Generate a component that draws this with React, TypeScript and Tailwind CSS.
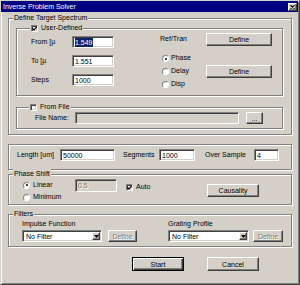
import React from "react";

const sunken =
  "border border-t-[#808080] border-l-[#808080] border-r-white border-b-white shadow-[inset_1px_1px_0_#404040,inset_-1px_-1px_0_#d4d0c8]";
const raised =
  "border border-t-white border-l-white border-r-[#404040] border-b-[#404040] shadow-[inset_-1px_-1px_0_#808080]";
const etched =
  "border border-[#808080] shadow-[inset_1px_1px_0_#fff,1px_1px_0_#fff]";
const disabledText = "text-[#808080] [text-shadow:1px_1px_0_#fff]";

function Legend({
  children,
  className = "",
}: {
  children: React.ReactNode;
  className?: string;
}) {
  return (
    <div
      className={`-mt-[6px] h-[10px] w-fit px-[1px] bg-[#d4d0c8] flex items-center gap-[3px] leading-[10px] ${className}`}
    >
      {children}
    </div>
  );
}

function TextBox({
  value,
  className = "",
  selected = false,
  disabled = false,
}: {
  value?: string;
  className?: string;
  selected?: boolean;
  disabled?: boolean;
}) {
  return (
    <div
      className={`${sunken} ${
        disabled ? "bg-[#d4d0c8]" : "bg-white"
      } flex items-center pl-[2px] leading-[9px] ${className}`}
    >
      {value && (
        <span
          className={
            selected
              ? "bg-[#0a246a] text-white"
              : disabled
              ? disabledText
              : ""
          }
        >
          {value}
        </span>
      )}
    </div>
  );
}

function Button({
  children,
  className = "",
  disabled = false,
}: {
  children: React.ReactNode;
  className?: string;
  disabled?: boolean;
}) {
  return (
    <div
      className={`${raised} bg-[#d4d0c8] flex items-center justify-center leading-[9px] ${
        disabled ? disabledText : ""
      } ${className}`}
    >
      {children}
    </div>
  );
}

function Check({ checked = false }: { checked?: boolean }) {
  return (
    <div className={`${sunken} bg-white w-[7px] h-[7px] shrink-0 flex items-center justify-center`}>
      {checked && (
        <svg width="5" height="5" viewBox="0 0 5 5">
          <path d="M0.5 2.3 L2 3.8 L4.6 1" stroke="#000" strokeWidth="1.2" fill="none" />
        </svg>
      )}
    </div>
  );
}

function Radio({ checked = false }: { checked?: boolean }) {
  return (
    <div className="w-[7px] h-[7px] shrink-0 rounded-full bg-white border border-t-[#808080] border-l-[#808080] border-r-white border-b-white flex items-center justify-center">
      {checked && <div className="w-[2px] h-[2px] rounded-full bg-black" />}
    </div>
  );
}

function Select({ className = "" }: { className?: string }) {
  return (
    <div className={`${sunken} bg-white h-[12px] flex items-stretch p-[1px] ${className}`}>
      <div className="flex-1 pl-[2px] flex items-center leading-[9px]">No Filter</div>
      <div className={`${raised} bg-[#d4d0c8] w-[8px] flex items-center justify-center`}>
        <svg width="5" height="3" viewBox="0 0 5 3">
          <path d="M0 0 H5 L2.5 3 Z" fill="#000" />
        </svg>
      </div>
    </div>
  );
}

export default function App() {
  return (
    <div className="w-[300px] h-[285px] bg-[#d4d0c8] border border-t-[#d4d0c8] border-l-[#d4d0c8] border-r-[#404040] border-b-[#404040] shadow-[inset_1px_1px_0_#fff,inset_-1px_-1px_0_#808080] flex flex-col font-['Liberation_Sans',Arial,sans-serif] text-[7px] text-black">
      {/* title bar */}
      <div className="h-[11px] mr-[1px] bg-[#000080] flex items-center justify-between pl-[2px]">
        <span className="text-white leading-[10px]">Inverse Problem Solver</span>
        <div className={`${raised} bg-[#d4d0c8] w-[9px] h-[8px] mr-[1px] flex items-center justify-center`}>
          <svg width="5" height="4" viewBox="0 0 5 4">
            <path d="M0.5 0.3 L4.5 3.7 M4.5 0.3 L0.5 3.7" stroke="#000" strokeWidth="1.1" />
          </svg>
        </div>
      </div>

      <div className="pl-[7px] flex flex-col">
        {/* Define Target Spectrum */}
        <div className={`${etched} mt-[6px] w-[284px] h-[117px] flex flex-col`}>
          <Legend className="ml-[4px]">Define Target Spectrum</Legend>

          <div className={`${etched} mt-[5px] ml-[7px] w-[267px] h-[68px] flex flex-col`}>
            <Legend className="ml-[13px]">
              <Check checked />
              <span>User-Defined</span>
            </Legend>
            <div className="flex">
              <div className="pl-[14px] mt-[3px] flex flex-col gap-[7px]">
                {[
                  ["From [µ", "1.549", true],
                  ["To [µ", "1.551", false],
                  ["Steps", "1000", false],
                ].map(([label, value, sel]) => (
                  <div key={label as string} className="flex items-center h-[12px]">
                    <span className="w-[41px] whitespace-nowrap overflow-hidden">{label}</span>
                    <TextBox value={value as string} selected={sel as boolean} className="w-[42px] h-[12px]" />
                  </div>
                ))}
              </div>
              <div className="ml-[46px] flex flex-col">
                <div className="flex items-center h-[13px]">
                  <span className="w-[46px]">Ref/Tran</span>
                  <Button className="w-[66px] h-[13px]">Define</Button>
                </div>
                <div className="mt-[6px] flex items-center">
                  <div className="w-[46px] pl-[2px] flex flex-col">
                    {[
                      ["Phase", true],
                      ["Delay", false],
                      ["Disp", false],
                    ].map(([label, on]) => (
                      <div key={label as string} className="h-[13px] flex items-center gap-[2px]">
                        <Radio checked={on as boolean} />
                        <span>{label}</span>
                      </div>
                    ))}
                  </div>
                  <Button className="w-[66px] h-[13px]">Define</Button>
                </div>
              </div>
            </div>
          </div>

          <div className={`${etched} mt-[11px] ml-[7px] w-[267px] h-[22px] flex flex-col`}>
            <Legend className="ml-[12px]">
              <Check />
              <span>From File</span>
            </Legend>
            <div className="pl-[18px] flex items-center h-[12px]">
              <span className="w-[40px]">File Name:</span>
              <TextBox disabled className="w-[164px] h-[12px]" />
              <Button className="ml-[7px] w-[17px] h-[12px]">...</Button>
            </div>
          </div>
        </div>

        {/* Length / Segments / Over Sample */}
        <div className={`${etched} mt-[9px] w-[284px] h-[26px] pt-[4px] pl-[8px]`}>
          <div className="flex items-center h-[12px]">
            <span className="w-[43px]">Length [um]</span>
            <TextBox value="50000" className="w-[55px] h-[12px]" />
            <span className="ml-[8px] w-[36px]">Segments</span>
            <TextBox value="1000" className="w-[36px] h-[12px]" />
            <span className="ml-[10px] w-[49px]">Over Sample</span>
            <TextBox value="4" className="w-[25px] h-[12px]" />
          </div>
        </div>

        {/* Phase Shift */}
        <div className={`${etched} mt-[4px] w-[284px] h-[31px] flex flex-col`}>
          <Legend className="ml-[4px]">Phase Shift</Legend>
          <div className="pl-[14px] flex items-start">
            <div className="w-[52px] flex flex-col">
              <div className="h-[12px] flex items-center gap-[3px]">
                <Radio checked />
                <span>Linear</span>
              </div>
              <div className="h-[12px] flex items-center gap-[3px]">
                <Radio />
                <span>Minimum</span>
              </div>
            </div>
            <TextBox value="0.5" disabled className="w-[42px] h-[13px]" />
            <div className="ml-[9px] mt-[4px] w-[81px] h-[9px] flex items-center gap-[3px]">
              <Check checked />
              <span>Auto</span>
            </div>
            <Button className="mt-[5px] w-[52px] h-[13px]">Causality</Button>
          </div>
        </div>

        {/* Filters */}
        <div className={`${etched} mt-[9px] w-[284px] h-[33px] flex flex-col`}>
          <Legend className="ml-[4px]">Filters</Legend>
          <div className="pl-[13px] flex">
            <div className="w-[146px] flex flex-col">
              <span className="h-[9px] leading-[9px]">Impulse Function</span>
              <div className="mt-[2px] flex">
                <Select className="w-[80px]" />
                <Button disabled className="ml-[6px] w-[29px] h-[12px]">Define</Button>
              </div>
            </div>
            <div className="flex flex-col">
              <span className="h-[9px] leading-[9px]">Grating Profile</span>
              <div className="mt-[2px] flex">
                <Select className="w-[81px]" />
                <Button disabled className="ml-[4px] w-[30px] h-[12px]">Define</Button>
              </div>
            </div>
          </div>
        </div>

        {/* Start / Cancel */}
        <div className="mt-[10px] ml-[124px] flex gap-[23px]">
          <div className="w-[52px] h-[14px] bg-[#d4d0c8] border border-black shadow-[inset_1px_1px_0_#fff,inset_-1px_-1px_0_#404040,inset_-2px_-2px_0_#808080] flex items-center justify-center leading-[9px]">
            Start
          </div>
          <Button className="w-[52px] h-[14px]">Cancel</Button>
        </div>
      </div>
    </div>
  );
}
